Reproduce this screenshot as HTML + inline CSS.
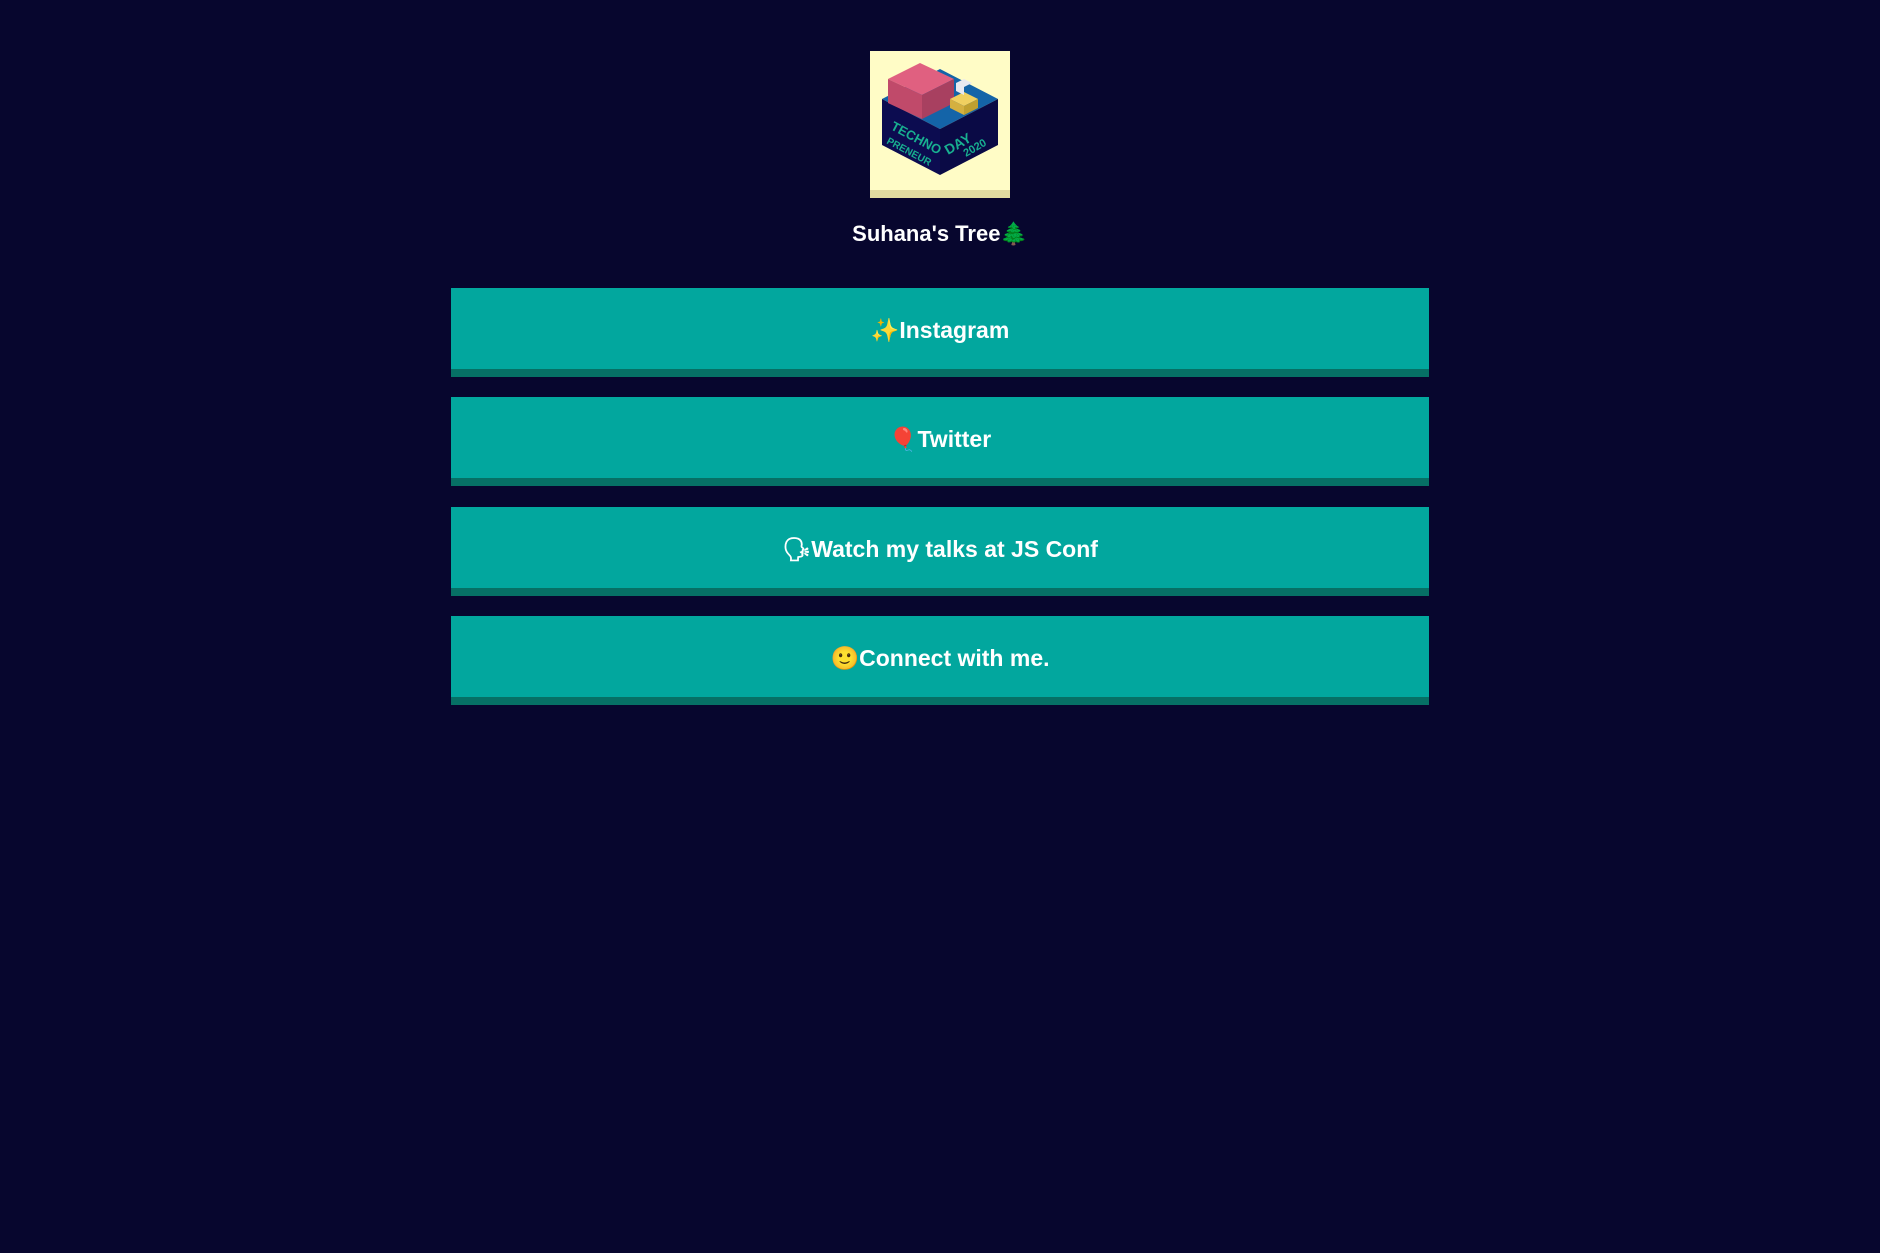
<!DOCTYPE html>
<html><head><meta charset="utf-8"><style>
html,body{margin:0;padding:0;background:#07062e;width:1880px;height:1253px;overflow:hidden;font-family:"Liberation Sans","DejaVu Sans",sans-serif;}
.logo{position:absolute;left:870px;top:51px;width:140px;height:147px;background:#fffcc6;}
.logo .strip{position:absolute;left:0;bottom:0;width:140px;height:8px;background:#e0dba0;}
.title{position:absolute;left:0;width:1880px;top:221px;text-align:center;color:#fff;font-weight:bold;font-size:22px;}
.btn{position:absolute;left:451px;width:978px;height:81px;background:#02a79e;border-bottom:8px solid #067065;box-sizing:content-box;color:#fff;font-weight:bold;font-size:23px;text-align:center;line-height:84px;}
</style></head><body>
<div class="logo">
<svg width="140" height="147" viewBox="0 0 140 147">
<polygon points="12,48 70,78 128,48 70,18" fill="#1464a8"/>
<polygon points="12,48 70,78 70,124 12,94" fill="#0c0c50"/>
<polygon points="70,78 128,48 128,94 70,124" fill="#0a0a45"/>
<polygon points="18,28 50,12 84,28 52,44" fill="#e06080"/>
<polygon points="18,28 52,44 52,68 18,52" fill="#c04a6a"/>
<polygon points="52,44 84,28 84,52 52,68" fill="#a84060"/>
<polygon points="80,48 94,41 108,48 94,55" fill="#f0d060"/>
<polygon points="80,48 94,55 94,64 80,57" fill="#d4b040"/>
<polygon points="94,55 108,48 108,57 94,64" fill="#c0a030"/>
<polygon points="86,32 94,28 102,32 94,36 94,44 86,40" fill="#e8e8f0"/>
<text x="20" y="78" font-size="13" font-weight="bold" fill="#18b090" transform="rotate(28 20 78)" font-family="Liberation Sans,sans-serif">TECHNO</text>
<text x="16" y="92" font-size="10" font-weight="bold" fill="#18b090" transform="rotate(28 16 92)" font-family="Liberation Sans,sans-serif">PRENEUR</text>
<text x="78" y="104" font-size="14" font-weight="bold" fill="#18b090" transform="rotate(-30 78 104)" font-family="Liberation Sans,sans-serif">DAY</text>
<text x="96" y="106" font-size="11" font-weight="bold" fill="#18b090" transform="rotate(-30 96 106)" font-family="Liberation Sans,sans-serif">2020</text>
</svg>
<div class="strip"></div></div>
<div class="title">Suhana's Tree🌲</div>
<div class="btn" style="top:288px">✨Instagram</div>
<div class="btn" style="top:397px">🎈Twitter</div>
<div class="btn" style="top:507px">🗣Watch my talks at JS Conf</div>
<div class="btn" style="top:616px">🙂Connect with me.</div>
</body></html>
